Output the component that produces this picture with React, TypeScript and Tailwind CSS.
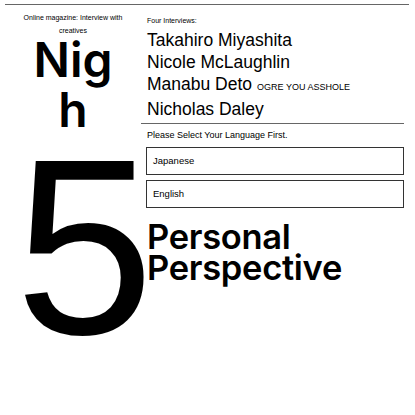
export default function App() {
  const names = ['Takahiro Miyashita', 'Nicole McLaughlin', 'Manabu Deto', 'Nicholas Daley']

  return (
    <div className="min-h-[415px] w-[415px] bg-white px-[5px] pt-[4px] text-black" style={{ fontFamily: '"Liberation Sans", Arial, sans-serif' }}>
      <div className="mr-[1px] border-t border-[#666]" />
      <div className="flex">
        <div className="w-[136px] shrink-0 text-center">
          <p className="mt-[6px] px-[10px] text-[7px] leading-[13px]">Online magazine: Interview with creatives</p>
          <h1
            className="mx-auto -mt-[2px] w-[100px] break-all text-[48px] font-semibold leading-[50px]"
            style={{ fontFamily: 'Inter, "Liberation Sans", sans-serif' }}
          >
            Nigh
          </h1>
          <div className="-mt-[12px] pl-[10px] text-left text-[250px] leading-none">5</div>
        </div>

        <div className="mr-[6px] flex-1">
          <p className="mt-[11px] pl-[6px] text-[7px] leading-[10px]">Four Interviews:</p>
          <ul className="mt-[3px] border-b border-[#666] pb-[3px] pl-[6px] text-[17.5px] leading-[22px]">
            {names.map((n) => (
              <li key={n}>
                {n}
                {n === 'Manabu Deto' && <span className="ml-[5px] text-[9px]">OGRE YOU ASSHOLE</span>}
              </li>
            ))}
          </ul>
          <p className="mt-[4px] pl-[6px] text-[9px] leading-[14px]">Please Select Your Language First.</p>
          <div className="mt-[5px] flex flex-col gap-[5px] pl-[5px]">
            <button className="h-[28px] w-full border border-[#333] px-[6px] text-left text-[9.5px]">Japanese</button>
            <button className="h-[28px] w-full border border-[#333] px-[6px] text-left text-[9.5px]">English</button>
          </div>
          <h2
            className="mt-[13px] pl-[6px] text-[34.5px] font-semibold leading-[31px] tracking-[-0.3px]"
            style={{ fontFamily: 'Inter, "Liberation Sans", sans-serif' }}
          >
            Personal
            <br />
            Perspective
          </h2>
        </div>
      </div>
    </div>
  )
}
